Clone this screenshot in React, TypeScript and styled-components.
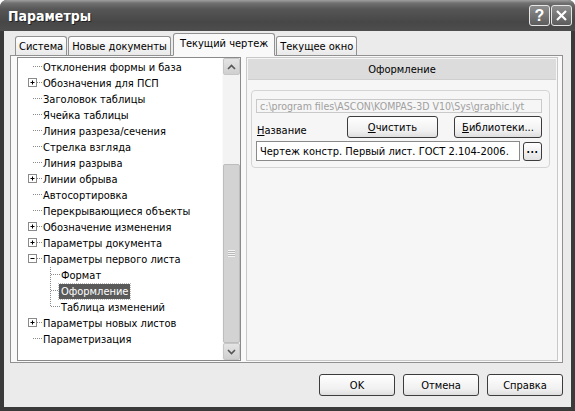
import styled, { createGlobalStyle } from 'styled-components';

const GlobalStyle = createGlobalStyle`
  html, body {
    margin: 0;
    padding: 0;
    background: #fff;
  }
  body {
    font-family: "DejaVu Sans Condensed", "Liberation Sans", Arial, sans-serif;
    font-size: 11px;
    color: #000;
  }
`;

const Window = styled.div`
  width: 575px;
  height: 411px;
  display: flex;
  flex-direction: column;
  background: #3a3a3a;
  border-radius: 7px 7px 0 0;
  overflow: hidden;
`;

const TitleBar = styled.div`
  height: 31px;
  flex-shrink: 0;
  display: flex;
  align-items: center;
  justify-content: space-between;
  padding: 0 3px 0 8px;
  background: linear-gradient(#a0a0a0 0%, #707070 10%, #565656 30%, #474747 70%, #4d4d4d 100%);
`;

const Title = styled.span`
  color: #fff;
  font-family: "DejaVu Sans Condensed", "Liberation Sans", sans-serif;
  font-weight: bold;
  font-size: 14px;
  text-shadow: 1px 1px 0 #222;
`;

const TitleButtons = styled.div`
  display: flex;
  gap: 1px;
`;

const TitleButton = styled.div`
  width: 21px;
  height: 21px;
  box-sizing: border-box;
  border: 1px solid #e6e6e6;
  border-radius: 3px;
  background: linear-gradient(#8e8e8e, #5c5c5c);
  color: #fff;
  display: flex;
  align-items: center;
  justify-content: center;
  font-family: "Liberation Sans", sans-serif;
  font-weight: bold;
  font-size: 16px;
`;

const Body = styled.div`
  flex: 1;
  margin: 0 4px 4px 4px;
  background: #ebebeb;
  display: flex;
  flex-direction: column;
  padding: 2px 8px 0 6px;
`;

const TabRow = styled.div`
  display: flex;
  align-items: flex-end;
  height: 23px;
  padding-left: 5px;
  position: relative;
  z-index: 1;
  margin-bottom: -1px;
`;

const Tab = styled.div<{ $active?: boolean }>`
  box-sizing: border-box;
  height: ${p => (p.$active ? 23 : 19)}px;
  padding: ${p => (p.$active ? '3px 6px 0' : '3px 3px 0')};
  margin: ${p => (p.$active ? '0 1px' : '0 1px 1px 0')};
  border: 1px solid #919191;
  border-bottom: ${p => (p.$active ? '1px solid #f9f9f9' : 'none')};
  border-radius: 3px 3px 0 0;
  background: ${p => (p.$active ? '#f9f9f9' : 'linear-gradient(#ffffff, #e9e9e9)')};
  white-space: nowrap;
`;

const Panel = styled.div`
  height: 308px;
  box-sizing: border-box;
  border: 1px solid #919191;
  background: #f9f9f9;
  display: flex;
  gap: 5px;
  padding: 1px 4px 1px 6px;
`;

const TreeBox = styled.div`
  width: 224px;
  box-sizing: border-box;
  border: 1px solid #8a8a8a;
  background: #fff;
  display: flex;
`;

const TreeList = styled.div`
  flex: 1;
  padding-top: 1px;
`;

const TreeRow = styled.div<{ $level: number }>`
  height: 16px;
  display: flex;
  align-items: center;
  padding-left: ${p => 9 + p.$level * 18}px;
`;

const TreeLabel = styled.span<{ $selected?: boolean }>`
  padding: 1px 2px;
  margin-left: -1px;
  white-space: nowrap;
  background: ${p => (p.$selected ? '#5a5a5a' : 'transparent')};
  color: ${p => (p.$selected ? '#fff' : '#000')};
  outline: ${p => (p.$selected ? '1px dotted #bbb' : 'none')};
`;

const ScrollBar = styled.div`
  width: 17px;
  display: flex;
  flex-direction: column;
  background: #f3f3f3;
  border-left: 1px solid #fafafa;
`;

const ScrollButton = styled.div`
  height: 17px;
  box-sizing: border-box;
  border: 1px solid #c6c6c6;
  border-radius: 2px;
  background: linear-gradient(#e4e4e4, #cfcfcf);
  display: flex;
  align-items: center;
  justify-content: center;
`;

const ScrollSpace = styled.div`
  height: 89px;
`;

const ScrollThumb = styled.div`
  flex: 1;
  box-sizing: border-box;
  border: 1px solid #bdbdbd;
  border-radius: 2px;
  background: #d3d3d3;
  display: flex;
  align-items: center;
  justify-content: center;
`;

const Grip = styled.div`
  width: 7px;
  height: 7px;
  background: repeating-linear-gradient(#f4f4f4 0 1px, #b8b8b8 1px 2px);
`;

const RightBox = styled.div`
  flex: 1;
  box-sizing: border-box;
  border: 1px solid #c8c8c8;
  background: #f6f6f6;
  padding: 1px;
  display: flex;
  flex-direction: column;
`;

const Header = styled.div`
  height: 20px;
  background: #dcdcdc;
  border-bottom: 1px solid #cfcfcf;
  display: flex;
  align-items: center;
  justify-content: center;
`;

const GroupBox = styled.div`
  margin: 10px 6px 0 3px;
  border: 1px solid #d4d4d4;
  border-radius: 4px;
  padding: 8px 7px 6px 4px;
  display: flex;
  flex-direction: column;
  gap: 3px;
`;

const Field = styled.div<{ $disabled?: boolean }>`
  height: 20px;
  box-sizing: border-box;
  border: 1px solid ${p => (p.$disabled ? '#c9c9c9' : '#8a8a8a')};
  background: ${p => (p.$disabled ? '#f6f6f6' : '#fff')};
  color: ${p => (p.$disabled ? '#a0a0a0' : '#000')};
  font-size: ${p => (p.$disabled ? 10.5 : 11)}px;
  padding: 0 3px;
  display: flex;
  align-items: center;
  white-space: nowrap;
  overflow: hidden;
  flex: 1;
`;

const ButtonRow = styled.div`
  display: flex;
  align-items: flex-end;
  height: 22px;
`;

const Label = styled.span`
  width: 90px;
  padding-left: 1px;
  padding-bottom: 1px;
`;

const Button = styled.div<{ $w: number }>`
  width: ${p => p.$w}px;
  height: 22px;
  box-sizing: border-box;
  border: 1px solid #3c3c3c;
  border-radius: 3px;
  background: linear-gradient(#ffffff, #f0f0f0 70%, #dedede);
  display: flex;
  align-items: center;
  justify-content: center;
`;

const Gap = styled.div`
  flex: 1;
`;

const FieldRow = styled.div`
  display: flex;
  align-items: center;
  gap: 3px;
`;

const SmallButton = styled.div`
  width: 19px;
  height: 19px;
  box-sizing: border-box;
  border: 1px solid #3c3c3c;
  border-radius: 3px;
  background: linear-gradient(#ffffff, #e2e2e2);
  display: flex;
  align-items: center;
  justify-content: center;
  font-weight: bold;
  font-size: 10px;
  letter-spacing: 0.5px;
  padding-bottom: 3px;
`;

const Footer = styled.div`
  flex: 1;
  display: flex;
  justify-content: flex-end;
  align-items: flex-start;
  gap: 8px;
  padding: 11px 0 0 0;
`;

type Item = { label: string; level: number; box?: 'plus' | 'minus'; selected?: boolean; last?: boolean };

const items: Item[] = [
  { label: 'Отклонения формы и база', level: 0 },
  { label: 'Обозначения для ПСП', level: 0, box: 'plus' },
  { label: 'Заголовок таблицы', level: 0 },
  { label: 'Ячейка таблицы', level: 0 },
  { label: 'Линия разреза/сечения', level: 0 },
  { label: 'Стрелка взгляда', level: 0 },
  { label: 'Линия разрыва', level: 0 },
  { label: 'Линии обрыва', level: 0, box: 'plus' },
  { label: 'Автосортировка', level: 0 },
  { label: 'Перекрывающиеся объекты', level: 0 },
  { label: 'Обозначение изменения', level: 0, box: 'plus' },
  { label: 'Параметры документа', level: 0, box: 'plus' },
  { label: 'Параметры первого листа', level: 0, box: 'minus' },
  { label: 'Формат', level: 1 },
  { label: 'Оформление', level: 1, selected: true },
  { label: 'Таблица изменений', level: 1, last: true },
  { label: 'Параметры новых листов', level: 0, box: 'plus' },
  { label: 'Параметризация', level: 0 },
];

function Connector({ item }: { item: Item }) {
  const dot = { stroke: '#8a8a8a', strokeWidth: 1, strokeDasharray: '1 1' };
  return (
    <svg width="15" height="16" viewBox="0 0 15 16">
      {item.level === 1 && (
        <line x1="5.5" y1="0" x2="5.5" y2={item.last ? 8 : 16} {...dot} />
      )}
      {item.box ? (
        <>
          <rect x="1.5" y="3.5" width="8" height="8" fill="#fff" stroke="#8a8a8a" />
          <line x1="3.5" y1="7.5" x2="7.5" y2="7.5" stroke="#000" />
          {item.box === 'plus' && <line x1="5.5" y1="5.5" x2="5.5" y2="9.5" stroke="#000" />}
          <line x1="10" y1="7.5" x2="15" y2="7.5" {...dot} />
        </>
      ) : (
        <line x1="6" y1="7.5" x2="15" y2="7.5" {...dot} />
      )}
    </svg>
  );
}

export default function App() {
  return (
    <>
      <GlobalStyle />
      <Window>
        <TitleBar>
          <Title>Параметры</Title>
          <TitleButtons>
            <TitleButton>?</TitleButton>
            <TitleButton>
              <svg width="11" height="11" viewBox="0 0 11 11">
                <path d="M1 1 L10 10 M10 1 L1 10" stroke="#fff" strokeWidth="2.2" />
              </svg>
            </TitleButton>
          </TitleButtons>
        </TitleBar>
        <Body>
          <TabRow>
            <Tab>Система</Tab>
            <Tab>Новые документы</Tab>
            <Tab $active>Текущий чертеж</Tab>
            <Tab>Текущее окно</Tab>
          </TabRow>
          <Panel>
            <TreeBox>
              <TreeList>
                {items.map(it => (
                  <TreeRow key={it.label} $level={it.level}>
                    <Connector item={it} />
                    <TreeLabel $selected={it.selected}>{it.label}</TreeLabel>
                  </TreeRow>
                ))}
              </TreeList>
              <ScrollBar>
                <ScrollButton>
                  <svg width="9" height="6" viewBox="0 0 9 6">
                    <path d="M1 5 L4.5 1.5 L8 5" fill="none" stroke="#555" strokeWidth="1.6" />
                  </svg>
                </ScrollButton>
                <ScrollSpace />
                <ScrollThumb>
                  <Grip />
                </ScrollThumb>
                <ScrollButton>
                  <svg width="9" height="6" viewBox="0 0 9 6">
                    <path d="M1 1 L4.5 4.5 L8 1" fill="none" stroke="#555" strokeWidth="1.6" />
                  </svg>
                </ScrollButton>
              </ScrollBar>
            </TreeBox>
            <RightBox>
              <Header>Оформление</Header>
              <GroupBox>
                <Field $disabled>c:\program files\ASCON\KOMPAS-3D V10\Sys\graphic.lyt</Field>
                <ButtonRow>
                  <Label>
                    <u>Н</u>азвание
                  </Label>
                  <Button $w={91}>
                    <span>
                      <u>О</u>чистить
                    </span>
                  </Button>
                  <Gap />
                  <Button $w={88}>
                    <span>
                      <u>Б</u>иблиотеки...
                    </span>
                  </Button>
                </ButtonRow>
                <FieldRow>
                  <Field>Чертеж констр. Первый лист. ГОСТ 2.104-2006.</Field>
                  <SmallButton>...</SmallButton>
                </FieldRow>
              </GroupBox>
            </RightBox>
          </Panel>
          <Footer>
            <Button $w={76}>OK</Button>
            <Button $w={76}>Отмена</Button>
            <Button $w={76}>Справка</Button>
          </Footer>
        </Body>
      </Window>
    </>
  );
}
